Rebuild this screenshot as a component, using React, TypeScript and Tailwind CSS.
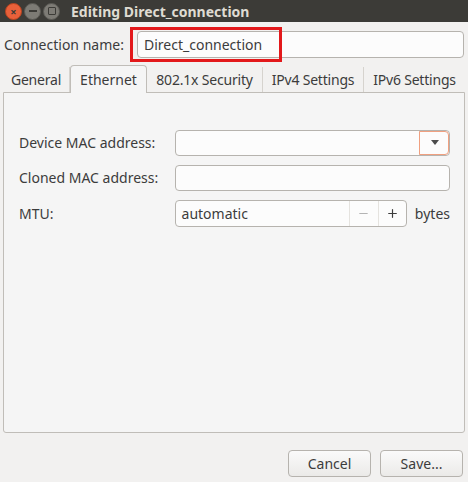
import { Minus, Plus } from "lucide-react";

const font = { fontFamily: '"Noto Sans", "DejaVu Sans", sans-serif' };

const TitleBar = () => (
  <div className="flex items-center h-[22px] bg-[#3c3b37] px-[5px] gap-[2px]">
    <div className="w-[17px] h-[17px] rounded-full bg-[#e8603a] border border-[#b8431f] flex items-center justify-center text-[#3c3b37] text-[11px] leading-none font-bold">
      ×
    </div>
    <div className="w-[17px] h-[17px] rounded-full bg-[#7d7b75] border border-[#5b5a55] flex items-center justify-center">
      <div className="w-[8px] h-[1.5px] bg-[#3c3b37]" />
    </div>
    <div className="w-[17px] h-[17px] rounded-full bg-[#7d7b75] border border-[#5b5a55] flex items-center justify-center">
      <div className="w-[8px] h-[8px] border-[1.5px] border-[#3c3b37] rounded-[1px]" />
    </div>
    <span className="ml-[9px] text-[14px] font-bold text-[#dfdbd2]">Editing Direct_connection</span>
  </div>
);

const tabs = [
  { label: "General", w: "w-[67px]" },
  { label: "Ethernet", w: "w-[77px]" },
  { label: "802.1x Security", w: "w-[116px]" },
  { label: "IPv4 Settings", w: "w-[101px]" },
  { label: "IPv6 Settings", w: "w-[101px]" },
];

export default function App() {
  return (
    <div className="w-[468px] h-[482px] bg-[#f2f1f0] text-[#3c3c3c] flex flex-col" style={font}>
      <TitleBar />

      <div className="flex items-center h-[42px] pl-[4px] pr-[4px] pt-[2px]">
        <span className="text-[14px] w-[124px]">Connection name:</span>
        <div className="relative flex-1 h-[27px] ml-[9px] rounded-[4px] border border-[#b6b3ae] bg-[#fcfcfc] flex items-center px-[6px] text-[14px] text-[#3c3c3c]">
          Direct_connection
          <div className="absolute left-[-8px] top-[-5px] w-[152px] h-[35px] border-[3px] border-[#e3191b]" />
        </div>
      </div>

      <div className="flex items-end h-[28px] px-[3px]">
        {tabs.map((t) => {
          const active = t.label === "Ethernet";
          return (
            <div
              key={t.label}
              className={
                active
                  ? `${t.w} h-[28px] flex items-center justify-center whitespace-nowrap text-[14px] bg-[#f5f5f5] border border-b-0 border-[#c0bdb8] rounded-t-[4px] -mb-px z-10`
                  : `${t.w} h-[25px] flex items-center justify-center whitespace-nowrap text-[14px] tracking-[-0.2px] border-r border-[#d6d3ce] last:border-r-0`
              }
            >
              {t.label}
            </div>
          );
        })}
      </div>

      <div className="mx-[3px] h-[341px] bg-[#f5f5f5] border border-[#c0bdb8] rounded-b-[3px] pl-[15px] pr-[14px] pt-[37px] flex flex-col gap-[10px] text-[14px]">
        <div className="flex items-center h-[25px]">
          <span className="w-[156px]">Device MAC address:</span>
          <div className="flex-1 h-[26px] flex rounded-[4px] border border-[#b6b3ae] bg-[#fcfcfc]">
            <div className="flex-1" />
            <div className="w-[30px] flex items-center justify-center border-l border-[#e5e3df] rounded-r-[4px] outline outline-[#f0a080] -outline-offset-1">
              <div className="w-0 h-0 border-l-[4px] border-r-[4px] border-t-[5px] border-l-transparent border-r-transparent border-t-[#4c4c4c]" />
            </div>
          </div>
        </div>

        <div className="flex items-center h-[25px]">
          <span className="w-[156px]">Cloned MAC address:</span>
          <div className="flex-1 h-[26px] rounded-[4px] border border-[#b6b3ae] bg-[#fcfcfc]" />
        </div>

        <div className="flex items-center h-[26px]">
          <span className="w-[156px]">MTU:</span>
          <div className="w-[233px] h-[27px] flex rounded-[4px] border border-[#b6b3ae] bg-[#fcfcfc]">
            <div className="flex-1 flex items-center px-[6px]">automatic</div>
            <div className="w-[29px] flex items-center justify-center border-l border-[#e5e3df] text-[#a8a8a8]">
              <Minus size={13} strokeWidth={1.6} />
            </div>
            <div className="w-[28px] flex items-center justify-center border-l border-[#e5e3df] text-[#3c3c3c]">
              <Plus size={13} strokeWidth={2.2} />
            </div>
          </div>
          <span className="ml-[8px]">bytes</span>
        </div>
      </div>

      <div className="flex justify-end gap-[9px] pr-[5px] mt-[17px]">
        <button className="w-[83px] h-[27px] rounded-[4px] border border-[#b6b3ae] bg-gradient-to-b from-[#fafafa] to-[#ebeae8] text-[14px] text-[#3c3c3c]">
          Cancel
        </button>
        <button className="w-[83px] h-[27px] rounded-[4px] border border-[#b6b3ae] bg-gradient-to-b from-[#fafafa] to-[#ebeae8] text-[14px] text-[#3c3c3c]">
          Save...
        </button>
      </div>
    </div>
  );
}
